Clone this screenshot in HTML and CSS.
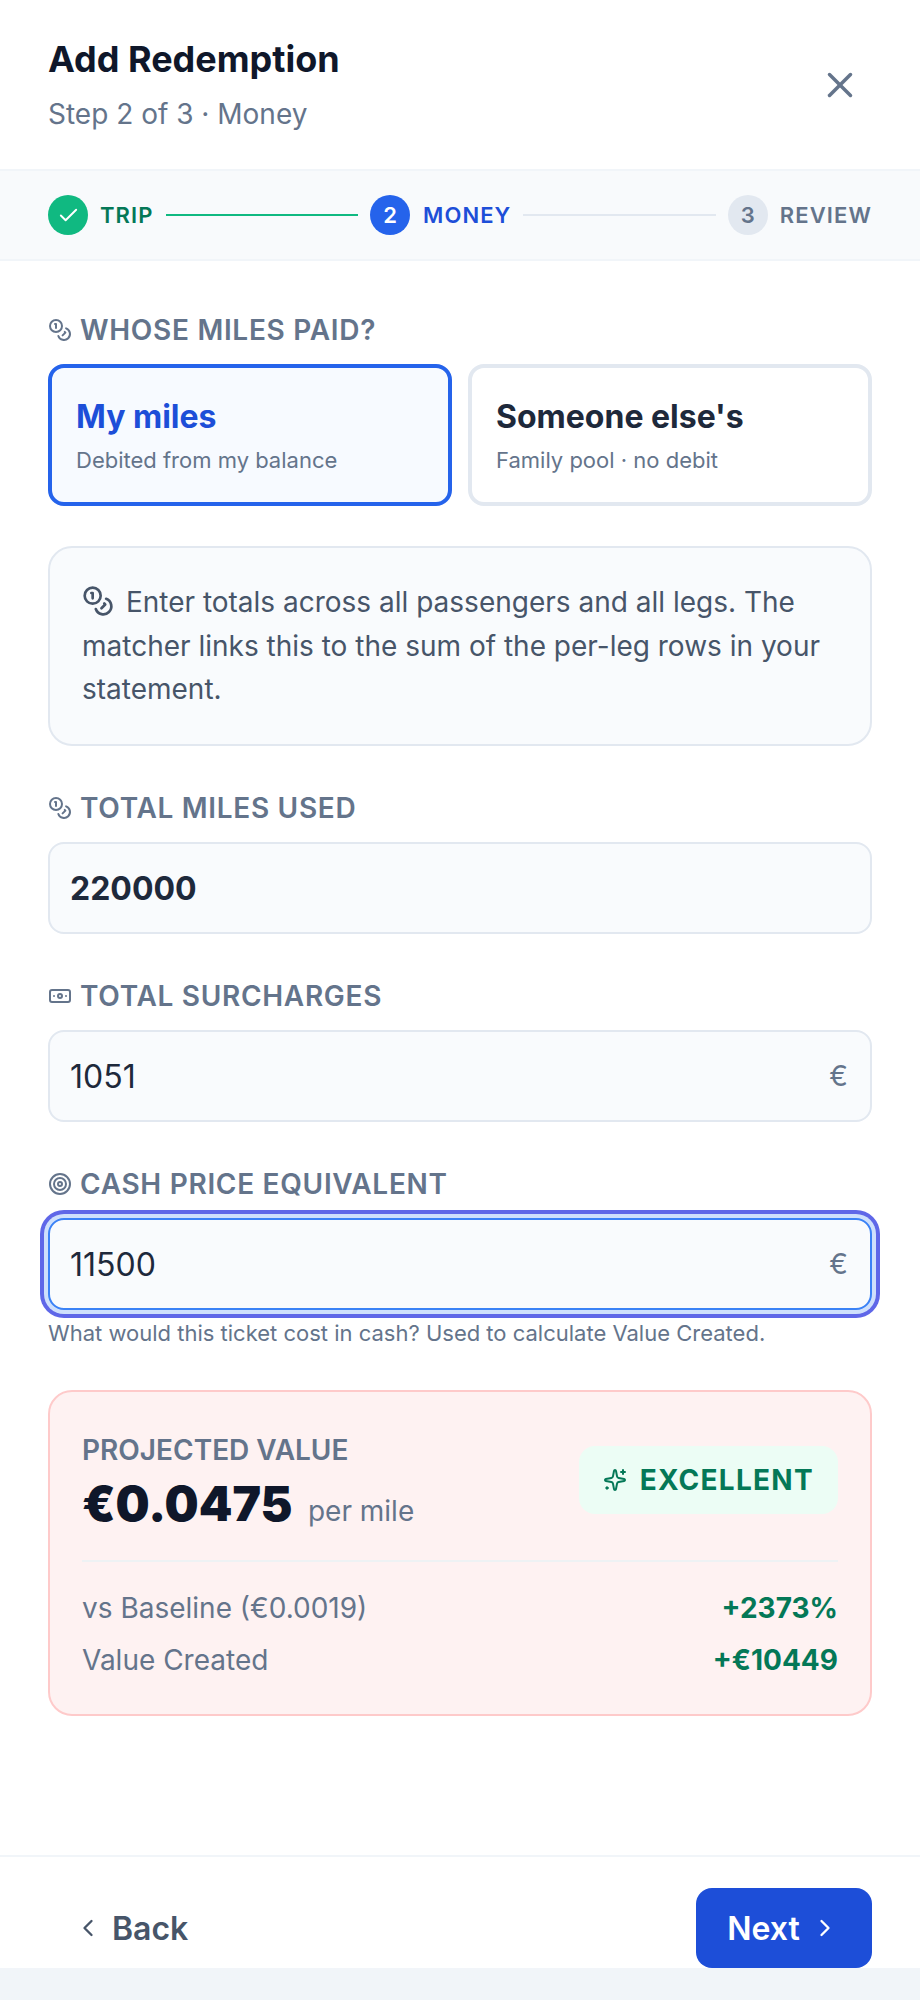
FILE: index.html
```html
<!DOCTYPE html>
<html>
<head>
<meta charset="utf-8"/>
<title>Add Redemption</title>
<link rel="stylesheet" href="styles.css">
</head>
<body>
<div class="sheet">
  <header class="head">
    <div>
      <h1>Add Redemption</h1>
      <p class="sub">Step 2 of 3 · Money</p>
    </div>
    <svg class="close" viewBox="0 0 24 24"><path d="M18 6 6 18"/><path d="m6 6 12 12"/></svg>
  </header>

  <div class="steps">
    <div class="step done">
      <span class="dot"><svg viewBox="0 0 24 24"><path d="M20 6 9 17l-5-5"/></svg></span>
      <span class="name">Trip</span>
    </div>
    <span class="line on"></span>
    <div class="step now">
      <span class="dot">2</span>
      <span class="name">Money</span>
    </div>
    <span class="line"></span>
    <div class="step">
      <span class="dot">3</span>
      <span class="name">Review</span>
    </div>
  </div>

  <main class="body">
    <div class="label first">
      <svg class="ico" viewBox="0 0 24 24"><circle cx="8" cy="8" r="6"/><path d="M18.09 10.37A6 6 0 1 1 10.34 18"/><path d="M7 6h1v4"/><path d="m16.71 13.88.7.71-2.82 2.82"/></svg>
      Whose miles paid?
    </div>
    <div class="choices">
      <div class="choice picked">
        <strong>My miles</strong>
        <span>Debited from my balance</span>
      </div>
      <div class="choice">
        <strong>Someone else's</strong>
        <span>Family pool · no debit</span>
      </div>
    </div>

    <div class="info">
      <svg class="ico-info" viewBox="0 0 24 24"><circle cx="8" cy="8" r="6"/><path d="M18.09 10.37A6 6 0 1 1 10.34 18"/><path d="M7 6h1v4"/><path d="m16.71 13.88.7.71-2.82 2.82"/></svg>
      Enter totals across all passengers and all legs. The matcher links this to the sum of the per-leg rows in your statement.
    </div>

    <div class="label">
      <svg class="ico" viewBox="0 0 24 24"><circle cx="8" cy="8" r="6"/><path d="M18.09 10.37A6 6 0 1 1 10.34 18"/><path d="M7 6h1v4"/><path d="m16.71 13.88.7.71-2.82 2.82"/></svg>
      Total miles used
    </div>
    <div class="field"><span class="val bold">220000</span></div>

    <div class="label">
      <svg class="ico" viewBox="0 0 24 24"><rect x="2" y="6" width="20" height="12" rx="2"/><circle cx="12" cy="12" r="2"/><path d="M6 12h.01M18 12h.01"/></svg>
      Total surcharges
    </div>
    <div class="field"><span class="val">1051</span><span class="unit">€</span></div>

    <div class="label">
      <svg class="ico" viewBox="0 0 24 24"><circle cx="12" cy="12" r="10"/><circle cx="12" cy="12" r="6"/><circle cx="12" cy="12" r="2"/></svg>
      Cash price equivalent
    </div>
    <div class="field focus"><span class="val">11500</span><span class="unit">€</span></div>
    <p class="help">What would this ticket cost in cash? Used to calculate Value Created.</p>

    <section class="result">
      <div class="result-top">
        <div>
          <div class="result-label">Projected value</div>
          <div class="rate"><b>€0.0475</b> <span>per mile</span></div>
        </div>
        <div class="badge">
          <svg viewBox="0 0 24 24"><path d="M11.017 2.814a1 1 0 0 1 1.966 0l1.051 5.558a2 2 0 0 0 1.594 1.594l5.558 1.051a1 1 0 0 1 0 1.966l-5.558 1.051a2 2 0 0 0-1.594 1.594l-1.051 5.558a1 1 0 0 1-1.966 0l-1.051-5.558a2 2 0 0 0-1.594-1.594l-5.558-1.051a1 1 0 0 1 0-1.966l5.558-1.051a2 2 0 0 0 1.594-1.594z"/><path d="M20 2v4"/><path d="M22 4h-4"/><circle class="spark" cx="4" cy="20" r="1.2"/></svg>
          Excellent
        </div>
      </div>
      <div class="row first-row"><span>vs Baseline (€0.0019)</span><b>+2373%</b></div>
      <div class="row"><span>Value Created</span><b>+€10449</b></div>
    </section>
  </main>

  <footer class="foot">
    <div class="back">
      <svg viewBox="0 0 24 24"><path d="m15 18-6-6 6-6"/></svg>
      Back
    </div>
    <div class="next">
      Next
      <svg viewBox="0 0 24 24"><path d="m9 18 6-6-6-6"/></svg>
    </div>
  </footer>
</div>
</body>
</html>
```

FILE: styles.css
```css
* {
  box-sizing: border-box;
}

html, body {
  margin: 0;
  padding: 0;
}

body {
  font-family: Inter, "Liberation Sans", sans-serif;
  background-color: #f1f5f9;
  color: #1e293b;
  height: 2000px;
  overflow: hidden;
}

svg {
  fill: none;
  stroke: currentColor;
  stroke-linecap: round;
  stroke-linejoin: round;
  stroke-width: 2;
}

.sheet {
  height: 1968px;
  background-color: #fff;
  display: flex;
  flex-direction: column;
}

.head {
  height: 169px;
  padding: 0 48px;
  display: flex;
  align-items: center;
  justify-content: space-between;
}

h1 {
  margin: 0;
  font-size: 36px;
  line-height: 44px;
  font-weight: 700;
  color: #0f172a;
}

.sub {
  margin: 15px 0 0;
  font-size: 28px;
  line-height: 36px;
  color: #64748b;
}

.close {
  width: 42px;
  height: 42px;
  color: #64748b;
  margin-right: 11px;
}

.steps {
  height: 92px;
  padding: 0 48px;
  background-color: #f8fafc;
  border-top: 2px solid #f1f5f9;
  border-bottom: 2px solid #f1f5f9;
  display: flex;
  align-items: center;
}

.step {
  display: flex;
  align-items: center;
  gap: 12px;
  font-size: 22px;
  font-weight: 600;
  letter-spacing: 1.1px;
  text-transform: uppercase;
  color: #64748b;
}

.dot {
  width: 40px;
  height: 40px;
  border-radius: 50%;
  background-color: #e2e8f0;
  display: flex;
  align-items: center;
  justify-content: center;
  letter-spacing: 0;
}

.dot svg {
  width: 23px;
  height: 23px;
  stroke-width: 2;
}

.step.done .dot {
  background-color: #10b981;
  color: #fff;
}

.step.done .name {
  color: #047857;
}

.step.now {
  gap: 13px;
}

.step.now .dot {
  background-color: #2563eb;
  color: #fff;
}

.step.now .name {
  color: #1d4ed8;
}

.line {
  flex: 1;
  height: 2px;
  margin: 0 12px;
  background-color: #e2e8f0;
}

.line.on {
  background-color: #10b981;
}

.body {
  flex: 1;
  padding: 0 48px;
}

.label {
  display: flex;
  align-items: center;
  gap: 8px;
  margin-top: 44px;
  height: 36px;
  font-size: 28px;
  font-weight: 600;
  letter-spacing: 0.7px;
  text-transform: uppercase;
  color: #64748b;
}

.label.first {
  margin-top: 51px;
}

.ico {
  width: 24px;
  height: 24px;
}

.choices {
  margin-top: 16px;
  display: grid;
  grid-template-columns: 1fr 1fr;
  gap: 16px;
}

.choice {
  height: 142px;
  padding: 2px 24px 0;
  border: 4px solid #e2e8f0;
  border-radius: 16px;
  display: flex;
  flex-direction: column;
  justify-content: center;
  gap: 8px;
}

.choice strong {
  font-size: 32px;
  line-height: 40px;
  font-weight: 700;
  color: #1e293b;
}

.choice span {
  font-size: 22px;
  line-height: 30px;
  color: #64748b;
}

.choice.picked {
  border-color: #2563eb;
  background-color: #f7faff;
}

.choice.picked strong {
  color: #1d4ed8;
}

.info {
  margin-top: 40px;
  height: 200px;
  padding: 33px 32px;
  background-color: #f9fbfd;
  border: 2px solid #e2e8f0;
  border-radius: 24px;
  font-size: 28px;
  line-height: 43.5px;
  color: #475569;
}

.ico-info {
  width: 32px;
  height: 32px;
  vertical-align: -5px;
  margin-right: 4px;
}

.field {
  height: 92px;
  margin-top: 16px;
  padding: 0 22px 0 20px;
  background-color: #f9fbfd;
  border: 2px solid #e2e8f0;
  border-radius: 16px;
  display: flex;
  align-items: center;
  justify-content: space-between;
  font-size: 32px;
  color: #1e293b;
}

.val.bold {
  font-weight: 700;
}

.unit {
  font-size: 28px;
  color: #64748b;
}

.field.focus {
  border-color: #3b82f6;
  box-shadow: 0 0 0 4px #cfe0fc, 0 0 0 8px #5f67e8;
}

.help {
  margin: 8px 0 0;
  font-size: 22px;
  line-height: 30px;
  color: #64748b;
}

.result {
  margin-top: 42px;
  height: 326px;
  padding: 42px 32px 0;
  background-color: #fef2f2;
  border: 2px solid #fecaca;
  border-radius: 24px;
}

.result-top {
  height: 128px;
  border-bottom: 2px solid #eef2f4;
  display: flex;
  align-items: flex-start;
  justify-content: space-between;
}

.result-label {
  font-size: 28px;
  line-height: 32px;
  font-weight: 600;
  text-transform: uppercase;
  color: #64748b;
}

.rate {
  margin-top: 8px;
}

.rate b {
  font-size: 48px;
  line-height: 60px;
  font-weight: 900;
  color: #0f172a;
}

.rate span {
  margin-left: 11px;
  font-size: 28px;
  color: #64748b;
}

.badge {
  margin-top: 12px;
  height: 68px;
  padding: 0 24px;
  background-color: #ecfdf5;
  border-radius: 16px;
  display: flex;
  align-items: center;
  gap: 13px;
  font-size: 28px;
  font-weight: 700;
  letter-spacing: 1.3px;
  text-transform: uppercase;
  color: #047857;
}

.badge svg {
  width: 24px;
  height: 24px;
}

.badge .spark {
  fill: currentColor;
  stroke-width: 1;
}

.row {
  margin-top: 16px;
  height: 36px;
  display: flex;
  align-items: center;
  justify-content: space-between;
  font-size: 28px;
  color: #64748b;
}

.row.first-row {
  margin-top: 28px;
}

.row b {
  font-weight: 700;
  color: #047857;
}

.foot {
  height: 113px;
  padding: 0 0 0 48px;
  border-top: 2px solid #f1f5f9;
  display: flex;
  align-items: flex-end;
  justify-content: space-between;
}

.back {
  height: 80px;
  padding-left: 26px;
  display: flex;
  align-items: center;
  gap: 10px;
  font-size: 32px;
  font-weight: 600;
  color: #475569;
}

.back svg, .next svg {
  width: 28px;
  height: 28px;
}

.next {
  width: 176px;
  height: 80px;
  margin-right: 48px;
  padding-right: 2px;
  border-radius: 16px;
  background-color: #1d4ed8;
  color: #fff;
  display: flex;
  align-items: center;
  justify-content: center;
  gap: 11px;
  font-size: 32px;
  font-weight: 600;
}
```
